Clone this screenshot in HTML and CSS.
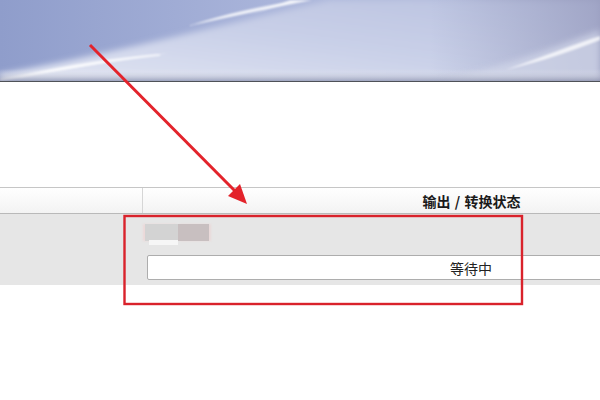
FILE: index.html
```html
<!DOCTYPE html>
<html lang="zh-CN">
<head>
<meta charset="utf-8">
<link rel="stylesheet" href="styles.css">
</head>
<body>
<div class="page">
  <div class="banner">
    <svg class="banner-art" width="600" height="81" viewBox="0 0 600 81" xmlns="http://www.w3.org/2000/svg">
      <defs>
        <linearGradient id="bg" x1="0" y1="0" x2="1" y2="0">
          <stop offset="0" stop-color="#8f9dcb"/>
          <stop offset="0.45" stop-color="#a9b4da"/>
          <stop offset="0.75" stop-color="#b3bcdc"/>
          <stop offset="1" stop-color="#9ba0c0"/>
        </linearGradient>
        <linearGradient id="light" x1="0" y1="1" x2="1" y2="0">
          <stop offset="0" stop-color="#e2e6f3"/>
          <stop offset="0.5" stop-color="#c9d0e8"/>
          <stop offset="1" stop-color="#b9c1df"/>
        </linearGradient>
        <linearGradient id="shade" x1="0" y1="0" x2="0" y2="1">
          <stop offset="0" stop-color="#ffffff" stop-opacity="0"/>
          <stop offset="0.85" stop-color="#ffffff" stop-opacity="0"/>
          <stop offset="1" stop-color="#8a8fa8" stop-opacity="0.6"/>
        </linearGradient>
        <linearGradient id="rside" x1="0" y1="0" x2="1" y2="0">
          <stop offset="0" stop-color="#9ea4c4" stop-opacity="0"/>
          <stop offset="1" stop-color="#9a9ec0" stop-opacity="1"/>
        </linearGradient>
        <filter id="soft" x="-10%" y="-50%" width="120%" height="200%">
          <feGaussianBlur stdDeviation="1.2"/>
        </filter>
        <filter id="softer" x="-10%" y="-50%" width="120%" height="200%">
          <feGaussianBlur stdDeviation="3"/>
        </filter>
      </defs>
      <rect width="600" height="81" fill="url(#bg)"/>
      <path d="M0 81 L0 74 C90 58 200 30 330 0 L600 0 L600 81 Z" fill="url(#light)" filter="url(#softer)"/>
      <rect x="430" y="0" width="170" height="81" fill="url(#rside)" opacity="0.8"/>
      <path d="M440 81 C500 68 560 45 600 30 L600 81 Z" fill="#d3d8ea" opacity="0.7" filter="url(#softer)"/>
      <g filter="url(#soft)">
        <path d="M505 70 C540 58 575 44 600 36 L600 40 C575 50 540 62 505 70 Z" fill="#ffffff" opacity="0.75"/>
        <path d="M188 26 C225 14 262 6 300 0 L312 0 C270 8 230 17 188 26 Z" fill="#ffffff" opacity="0.85"/>
        <path d="M230 22 C255 13 280 5 300 0 L290 0 C270 8 250 15 230 22 Z" fill="#ffffff" opacity="0.7"/>
        <path d="M0 79 C60 68 120 58 170 53 C120 60 60 70 0 81 Z" fill="#ffffff" opacity="0.95"/>
        <path d="M20 76 C70 64 110 58 160 54 L160 56 C110 61 70 68 20 78 Z" fill="#ffffff" opacity="0.6"/>
      </g>
      <rect width="600" height="81" fill="url(#shade)"/>
    </svg>
  </div>
  <div class="spacer"></div>
  <div class="table">
    <div class="thead">
      <div class="th th-first"></div>
      <div class="th th-status">输出 / 转换状态</div>
    </div>
    <div class="trow">
      <div class="td td-first"></div>
      <div class="td td-status">
        <div class="blur-name">
          <span class="blur-a"></span><span class="blur-b"></span>
          <span class="blur-c"></span>
        </div>
        <div class="bar">等待中</div>
      </div>
    </div>
  </div>
  <svg class="annot" width="600" height="400" viewBox="0 0 600 400" xmlns="http://www.w3.org/2000/svg">
    <rect x="124.5" y="216" width="397.5" height="88" fill="none" stroke="#d9222b" stroke-width="2.4"/>
    <line x1="90" y1="45" x2="238" y2="194" stroke="#e3232b" stroke-width="3"/>
    <polygon points="247,204 228,196 240,184" fill="#e3232b"/>
  </svg>
</div>
</body>
</html>
```
FILE: styles.css
```css
html, body {
  margin: 0;
  padding: 0;
  background: #ffffff;
}
body {
  width: 600px;
  height: 400px;
  overflow: hidden;
  font-family: "Noto Sans CJK SC", "Liberation Sans", sans-serif;
  color: #1a1a1a;
}
.page {
  position: relative;
  width: 600px;
  height: 400px;
  overflow: hidden;
}
.banner {
  height: 81px;
  border-bottom: 1px solid #4f5258;
}
.banner-art {
  display: block;
}
.spacer {
  height: 105px;
}
.table {
  width: 800px;
}
.thead {
  display: flex;
  height: 25px;
  border-top: 1px solid #c6c6c6;
  border-bottom: 1px solid #b9b9b9;
  background: linear-gradient(#ffffff, #f3f3f3);
}
.th-first {
  width: 142px;
  border-right: 1px solid #d6d6d6;
}
.th-status {
  flex: 1;
  text-align: center;
  font-weight: bold;
  font-size: 14px;
  line-height: 27px;
  word-spacing: 1px;
}
.trow {
  display: flex;
  height: 71px;
  background: #e6e6e6;
}
.td-first {
  width: 143px;
}
.td-status {
  flex: 1;
  display: flex;
  flex-direction: column;
  padding: 10px 5px 0 4px;
}
.blur-name {
  position: relative;
  display: flex;
  height: 21px;
  margin-left: -2px;
}
.blur-a {
  width: 33px;
  height: 17px;
  background: #d3d3d3;
  box-shadow: -2px 0 2px #ecd8d8;
}
.blur-b {
  width: 31px;
  height: 17px;
  background: #c8bfc0;
  box-shadow: 2px 0 2px #ead9d9;
}
.blur-c {
  position: absolute;
  left: 4px;
  top: 16px;
  width: 29px;
  height: 5px;
  background: #f6f6f6;
}
.bar {
  margin-top: 10px;
  height: 23px;
  border: 1px solid #adadad;
  border-radius: 2px;
  background: #ffffff;
  text-align: center;
  font-size: 14px;
  line-height: 24px;
  color: #222222;
}
.annot {
  position: absolute;
  left: 0;
  top: 0;
  pointer-events: none;
}
```
